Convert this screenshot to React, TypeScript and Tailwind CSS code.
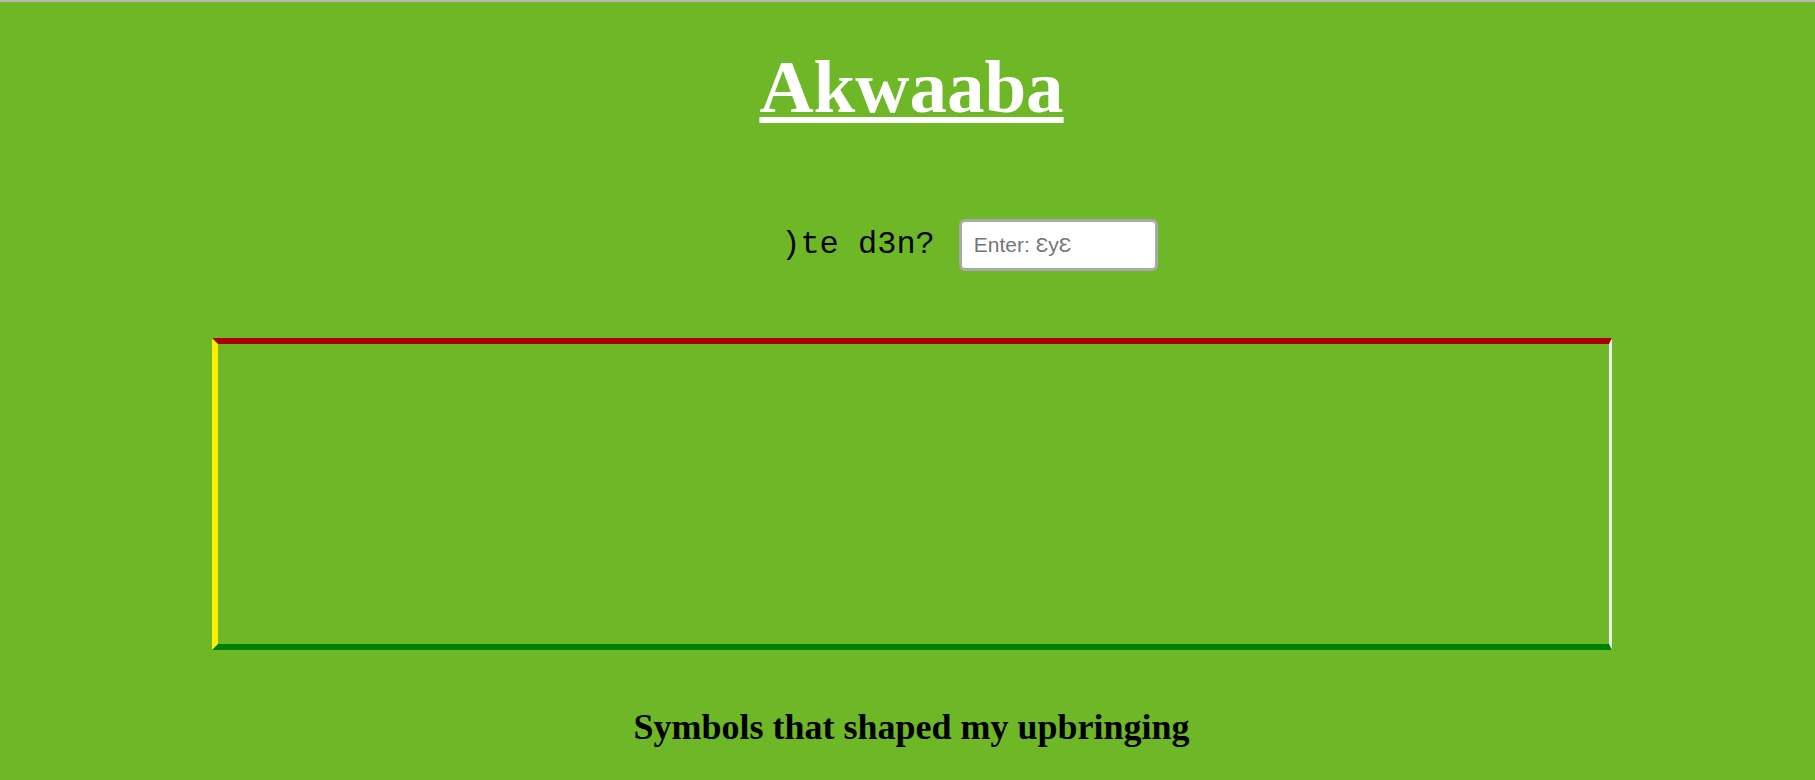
export default function App() {
  return (
    <div className="min-h-[780px] w-full bg-[#6eb726]">
      <div className="h-[2px] bg-[#b8b8ae]" />
      <div className="flex flex-col items-center pl-2">
        <h1
          className="mt-[42px] text-[75px] leading-[86px] font-bold text-white underline decoration-[6px] underline-offset-[5px]"
          style={{ fontFamily: '"Liberation Serif", "Times New Roman", serif' }}
        >
          Akwaaba
        </h1>

        <div className="mt-[89px] flex w-full items-center justify-center pl-[116px]">
          <label
            htmlFor="greeting"
            className="text-[32px] leading-[52px] text-black"
            style={{ fontFamily: '"Liberation Mono", "Courier New", monospace' }}
          >
            )te d3n?
          </label>
          <input
            id="greeting"
            type="text"
            placeholder="Enter: ƐyƐ"
            className="ml-6 box-border h-[52px] w-[199px] rounded-[6px] border-[3px] border-[#a9a9a9] bg-white px-3 text-[21px] text-black placeholder-[#757575] outline-none"
            style={{ fontFamily: '"Liberation Sans", Arial, sans-serif' }}
          />
        </div>

        <div className="mt-[67px] box-border h-[312px] w-[1400px] border-t-[6px] border-r-[3px] border-b-[6px] border-l-[6px] border-t-[#aa0000] border-r-[#eeeeee] border-b-[#008000] border-l-[#ffee00]" />

        <h2
          className="mt-[57px] text-[36px] leading-[40px] font-bold text-black"
          style={{ fontFamily: '"Liberation Serif", "Times New Roman", serif' }}
        >
          Symbols that shaped my upbringing
        </h2>
      </div>
    </div>
  );
}
